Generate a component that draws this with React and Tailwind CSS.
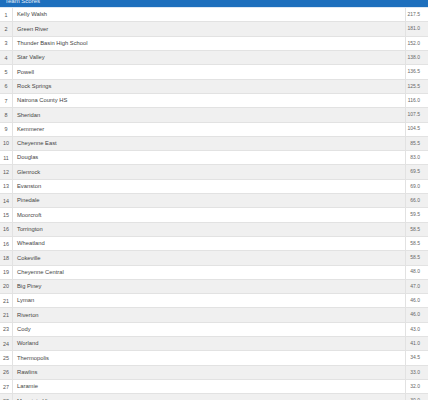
const scores = [
  [1, "Kelly Walsh", "217.5"],
  [2, "Green River", "181.0"],
  [3, "Thunder Basin High School", "152.0"],
  [4, "Star Valley", "138.0"],
  [5, "Powell", "136.5"],
  [6, "Rock Springs", "125.5"],
  [7, "Natrona County HS", "116.0"],
  [8, "Sheridan", "107.5"],
  [9, "Kemmerer", "104.5"],
  [10, "Cheyenne East", "85.5"],
  [11, "Douglas", "83.0"],
  [12, "Glenrock", "69.5"],
  [13, "Evanston", "69.0"],
  [14, "Pinedale", "66.0"],
  [15, "Moorcroft", "59.5"],
  [16, "Torrington", "58.5"],
  [16, "Wheatland", "58.5"],
  [18, "Cokeville", "58.5"],
  [19, "Cheyenne Central", "48.0"],
  [20, "Big Piney", "47.0"],
  [21, "Lyman", "46.0"],
  [21, "Riverton", "46.0"],
  [23, "Cody", "43.0"],
  [24, "Worland", "41.0"],
  [25, "Thermopolis", "34.5"],
  [26, "Rawlins", "33.0"],
  [27, "Laramie", "32.0"],
  [28, "Mountain View", "30.0"],
]

const App = () => {
  return (
    <div className="w-[428px] h-[400px] overflow-hidden bg-white font-['Liberation_Sans',Arial,sans-serif]">
      <div className="h-[8.2px] bg-[#1d6fbd] border-b border-[#dce8f4] overflow-hidden">
        <div className="pl-[5px] text-[6px] leading-[6px] -mt-[2.5px] text-[#e8f0f8]">Team Scores</div>
      </div>
      <div className="flex flex-col">
        {scores.map(([rank, name, score], i) => (
          <div
            key={name}
            className={`flex h-[14.3px] shrink-0 border-b border-[#e2e2e2] text-[5.8px] ${
              i % 2 === 0 ? "bg-white" : "bg-[#f0f0f0]"
            }`}
          >
            <div className="w-[13px] shrink-0 border-r border-[#e2e2e2] flex items-center justify-center text-[5.4px] text-[#555]">
              {rank}
            </div>
            <div className="flex-1 flex items-center pl-[4px] text-[#444]">{name}</div>
            <div className="w-[23px] shrink-0 border-l border-[#e2e2e2] flex items-center justify-end pr-[8px] text-[5px] text-[#666]">
              {score}
            </div>
          </div>
        ))}
      </div>
    </div>
  )
}

export default App
